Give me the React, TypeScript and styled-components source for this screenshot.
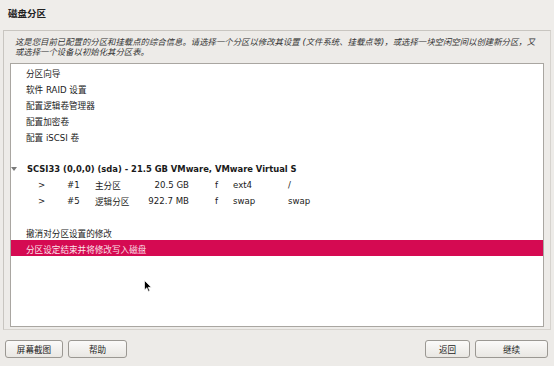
import styled, { createGlobalStyle } from "styled-components";
import { FC } from "react";

const GlobalStyle = createGlobalStyle`
  html, body {
    margin: 0;
    padding: 0;
    background: #edebe8;
  }
  body {
    font-family: "DejaVu Sans", "Noto Sans CJK SC", sans-serif;
    color: #1a1a1a;
  }
`;

interface Partition {
	num: string;
	kind: string;
	size: string;
	flag: string;
	fs: string;
	mount: string;
}

const partitions: Partition[] = [
	{ num: "#1", kind: "主分区", size: "20.5 GB", flag: "f", fs: "ext4", mount: "/" },
	{ num: "#5", kind: "逻辑分区", size: "922.7 MB", flag: "f", fs: "swap", mount: "swap" },
];

const topItems = ["分区向导", "软件 RAID 设置", "配置逻辑卷管理器", "配置加密卷", "配置 iSCSI 卷"];

const App: FC = () => {
	return (
		<>
			<GlobalStyle />
			<Page>
				<Header>
					<Title>磁盘分区</Title>
				</Header>
				<Frame>
					<Description>
						这是您目前已配置的分区和挂载点的综合信息。请选择一个分区以修改其设置 (文件系统、挂载点等)，或选择一块空闲空间以创建新分区，又
						<br />
						或选择一个设备以初始化其分区表。
					</Description>
					<ListBox>
						{topItems.map((item) => (
							<Row key={item}>{item}</Row>
						))}
						<Row />
						<Row device>
							<Expander />
							SCSI33 (0,0,0) (sda) - 21.5 GB VMware, VMware Virtual S
						</Row>
						{partitions.map((p) => (
							<PartRow key={p.num}>
								<span>&gt;</span>
								<span>{p.num}</span>
								<span>{p.kind}</span>
								<SizeCell>{p.size}</SizeCell>
								<FlagCell>{p.flag}</FlagCell>
								<span>{p.fs}</span>
								<span>{p.mount}</span>
							</PartRow>
						))}
						<Row />
						<Row>撤消对分区设置的修改</Row>
						<Row selected>分区设定结束并将修改写入磁盘</Row>
						<Cursor viewBox="0 0 8 12" width="8" height="12">
							<path d="M0.5 0.5 L0.5 10 L2.8 7.8 L4.4 11.4 L5.8 10.8 L4.2 7.3 L7.3 7.3 Z" fill="#000" stroke="#fff" strokeWidth="0.7" />
						</Cursor>
					</ListBox>
				</Frame>
				<ButtonBar>
					<ButtonGroup>
						<Button w={58}>屏幕截图</Button>
						<Button w={59}>帮助</Button>
					</ButtonGroup>
					<ButtonGroup>
						<Button w={45}>返回</Button>
						<Button w={73}>继续</Button>
					</ButtonGroup>
				</ButtonBar>
			</Page>
		</>
	);
};

export default App;

const Page = styled.div`
  width: 554px;
  height: 366px;
  overflow: hidden;
  background: #edebe8;
`;

const Header = styled.div`
  height: 30px;
  display: flex;
  align-items: center;
  padding-left: 8px;
  padding-bottom: 4px;
  box-sizing: border-box;
  background: #efedea;
`;

const Title = styled.div`
  font-size: 9.5px;
  font-weight: bold;
  color: #222;
`;

const Frame = styled.div`
  margin-left: 3px;
  width: 548px;
  height: 300px;
  box-sizing: border-box;
  border: 1px solid #c8c5c0;
  border-right-color: #d6d3ce;
  border-bottom-color: #d6d3ce;
  padding: 0 6px 2px 6px;
  display: flex;
  flex-direction: column;
`;

const Description = styled.div`
  font-size: 8.4px;
  line-height: 10px;
  font-style: italic;
  color: #333;
  padding: 6px 0 6px 5px;
  white-space: nowrap;
`;

const ListBox = styled.div`
  position: relative;
  height: 264px;
  box-sizing: border-box;
  background: #fff;
  border: 1px solid #a9a6a1;
`;

const Row = styled.div<{ selected?: boolean; device?: boolean }>`
  height: 16px;
  box-sizing: border-box;
  padding-top: 2px;
  display: flex;
  align-items: center;
  padding-left: 15px;
  font-size: ${(props) => (props.device ? "8.4px" : "8.6px")};
  font-weight: ${(props) => (props.device ? "bold" : "normal")};
  white-space: nowrap;
  background: ${(props) => (props.selected ? "#d50a52" : "transparent")};
  color: ${(props) => (props.selected ? "#fbe3ea" : "#1a1a1a")};
`;

const Expander = styled.span`
  width: 0;
  height: 0;
  margin-left: -15px;
  margin-right: 10px;
  border-left: 3px solid transparent;
  border-right: 3px solid transparent;
  border-top: 4px solid #7a7a7a;
`;

const PartRow = styled.div`
  height: 16px;
  box-sizing: border-box;
  padding-top: 2px;
  display: grid;
  grid-template-columns: 29px 28px 50px 44px 44px 55px auto;
  align-items: center;
  padding-left: 27px;
  font-size: 8.6px;
  white-space: nowrap;
`;

const SizeCell = styled.span`
  text-align: right;
`;

const FlagCell = styled.span`
  padding-left: 26px;
`;

const Cursor = styled.svg`
  position: absolute;
  left: 133px;
  top: 216px;
`;

const ButtonBar = styled.div`
  display: flex;
  justify-content: space-between;
  padding: 10px 6px 0 5px;
`;

const ButtonGroup = styled.div`
  display: flex;
  gap: 5px;
`;

const Button = styled.button<{ w: number }>`
  width: ${(props) => props.w}px;
  height: 18px;
  box-sizing: border-box;
  padding: 0;
  border: 1px solid #9b9893;
  border-radius: 3px;
  background: linear-gradient(#fbfaf9, #e9e7e3);
  font-family: "DejaVu Sans", "Noto Sans CJK SC", sans-serif;
  font-size: 8.6px;
  color: #222;
`;
